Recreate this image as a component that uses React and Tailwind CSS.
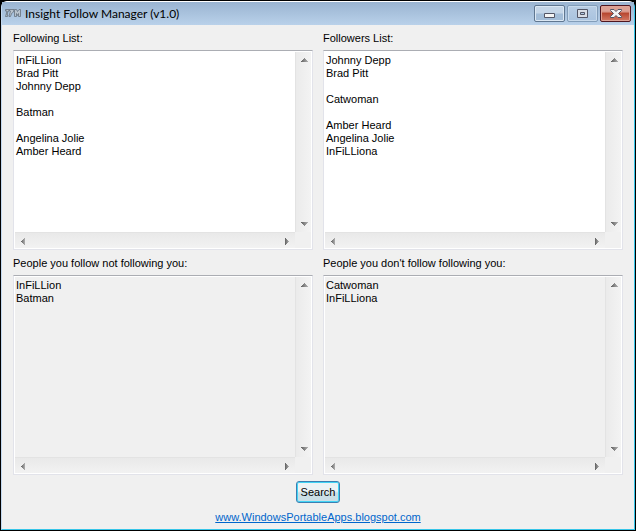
import React from 'react';

const following = 'InFiLLion\nBrad Pitt\nJohnny Depp\n\nBatman\n\nAngelina Jolie\nAmber Heard';
const followers = 'Johnny Depp\nBrad Pitt\n\nCatwoman\n\nAmber Heard\nAngelina Jolie\nInFiLLiona';

const arrows = {
  up: 'M3 0h1v1h1v1h1v1h1v1H0V3h1V2h1V1h1z',
  down: 'M0 0h7v1H6v1H5v1H4v1H3V3H2V2H1V1H0z',
  left: 'M3 0h1v7H3V6H2V5H1V4H0V3h1V2h1V1h1z',
  right: 'M0 0h1v1h1v1h1v1h1v1H3v1H2v1H1v1H0z',
};

function Arrow({ dir }) {
  const vertical = dir === 'up' || dir === 'down';
  const id = React.useId();
  return (
    <svg width={vertical ? 7 : 4} height={vertical ? 4 : 7} viewBox={vertical ? '0 0 7 4' : '0 0 4 7'} aria-hidden="true" shapeRendering="crispEdges">
      <defs>
        <linearGradient id={id}>
          <stop offset="0" stopColor="#606060" />
          <stop offset="1" stopColor="#b0b0b0" />
        </linearGradient>
      </defs>
      <path d={arrows[dir]} fill={`url(#${id})`} />
    </svg>
  );
}

function ScrollButton({ dir }) {
  return (
    <button type="button" aria-label={`Scroll ${dir}`} className="flex h-4 w-4 shrink-0 items-center justify-center">
      <Arrow dir={dir} />
    </button>
  );
}

function ListBox({ id, label, value, readOnly }) {
  return (
    <div className="flex min-h-0 flex-col">
      <label htmlFor={id} className="h-5 text-[11px] leading-4">{label}</label>
      <div className={`grid min-h-[200px] flex-1 grid-cols-[1fr_16px] grid-rows-[1fr_16px] border border-[#e2e3ea] border-t-[#abadb3] p-px ring-1 ring-inset ring-white ${readOnly ? 'bg-[#f0f0f0]' : 'bg-white'}`}>
        <textarea
          id={id}
          defaultValue={value}
          readOnly={readOnly}
          wrap="off"
          spellCheck={false}
          className="block h-full w-full min-w-0 resize-none overflow-hidden bg-transparent px-px pt-0.5 text-[11px] leading-[13px] text-black outline-none"
        />
        <div className="flex flex-col justify-between border-l border-[#e3e3e3] bg-linear-to-r from-[#ebebeb] to-[#f3f3f3]">
          <ScrollButton dir="up" />
          <ScrollButton dir="down" />
        </div>
        <div className="flex justify-between border-t border-[#e3e3e3] bg-linear-to-b from-[#e9e9e9] to-[#f2f2f2]">
          <ScrollButton dir="left" />
          <ScrollButton dir="right" />
        </div>
        <div className="bg-[#f0f0f0]" />
      </div>
    </div>
  );
}

function TitleBar() {
  return (
    <header className="flex h-[23px] shrink-0 items-start bg-linear-to-b from-[#9ab4d1] to-[#b9d1ea] pr-[3px] pl-[3px]">
      <svg className="mt-1 mr-1" width="16" height="14" viewBox="0 0 16 14" fill="#b8c2cc" stroke="#66717d" aria-hidden="true">
        <path d="M.5 3.500h4l-.5 1.500H3l-1 4h1l-.5 1.500h-2l.5-1.500L2 5H.5z" strokeWidth=".8" />
        <path d="M4.500 3.500H9L8.500 6 6.500 7.500 5.500 10.500H4L5.500 5h-1z" strokeWidth=".8" />
        <path d="M9.500 3.500h2l1 2 1.500-2h1.500v7h-2V7.500l-1 2-1-2v3h-2z" strokeWidth=".8" />
      </svg>
      <h1 className="flex-1 font-['Lato','Noto_Sans',sans-serif] text-xs leading-6 text-black">Insight Follow Manager (v1.0)</h1>
      <div className="flex gap-0.5 pt-[3px]">
        <button type="button" aria-label="Minimize" className="flex h-[17px] w-[31px] items-center justify-center rounded-xs border border-[#5f7690] bg-linear-to-b from-[#c5d6e8] from-45% to-[#a3bdd8] to-55% ring-1 ring-inset ring-[#dce8f4]">
          <svg width="11" height="9" viewBox="0 0 11 9" aria-hidden="true"><path d="M.5 4.500h10v4H.5z" fill="#f5f5f5" stroke="#535666" /></svg>
        </button>
        <button type="button" aria-label="Maximize" disabled className="flex h-[17px] w-[31px] items-center justify-center rounded-xs border border-[#829db9] bg-linear-to-b from-[#b8cde4] to-[#a9c3df] ring-1 ring-inset ring-[#c8daec]">
          <svg width="11" height="9" viewBox="0 0 11 9" aria-hidden="true"><path d="M.5.5h10v8H.5zM3.500 3.500v2h4v-2z" fill="#d8dde5" fillRule="evenodd" stroke="#535666" /></svg>
        </button>
        <button type="button" aria-label="Close" className="flex h-[17px] w-[31px] items-center justify-center rounded-xs border border-[#4e1620] bg-linear-to-b from-[#dca094] from-35% via-[#b84831] via-50% to-[#d37a65] ring-1 ring-inset ring-[#dfa295]">
          <svg width="12" height="9" viewBox="0 0 12 9" aria-hidden="true"><path d="M.5.500h3.500L6 2.500 8 .500h3.500v1L8.500 4.500l3 3v1H8L6 6.500 4 8.500H.500v-1l3-3-3-3z" fill="#f4f4f4" stroke="#535666" /></svg>
        </button>
      </div>
    </header>
  );
}

export default function App() {
  return (
    <div className="flex min-h-screen flex-col bg-black p-px font-['Liberation_Sans',Arial,sans-serif] text-black">
      <div className="flex flex-1 flex-col rounded-t-md border border-t-white border-r-[#36c5e8] border-b-[#36c5e8] border-l-[#c2d8ef] bg-[#f0f0f0]">
        <TitleBar />
        <main className="flex flex-1 flex-col px-[11px] pt-[5px]">
          <div className="grid flex-1 grid-cols-2 gap-x-2.5 gap-y-[5px]">
            <ListBox id="following" label="Following List:" value={following} />
            <ListBox id="followers" label="Followers List:" value={followers} />
            <ListBox id="not-following-you" label="People you follow not following you:" value={'InFiLLion\nBatman'} readOnly />
            <ListBox id="not-followed" label="People you don't follow following you:" value={'Catwoman\nInFiLLiona'} readOnly />
          </div>
          <div className="flex flex-col items-center gap-1.5 pt-1.5 pb-1">
            <button type="button" className="h-[22px] w-11 rounded-[3px] border border-[#3c7fb1] bg-linear-to-b from-[#edf3f5] from-45% to-[#cbdfe6] to-55% text-[11px] leading-[18px] ring-1 ring-inset ring-[#42d4f5]">Search</button>
            <a href="http://www.WindowsPortableApps.blogspot.com" className="text-[11px] leading-4 text-[#0066cc] underline">www.WindowsPortableApps.blogspot.com</a>
          </div>
        </main>
      </div>
    </div>
  );
}
